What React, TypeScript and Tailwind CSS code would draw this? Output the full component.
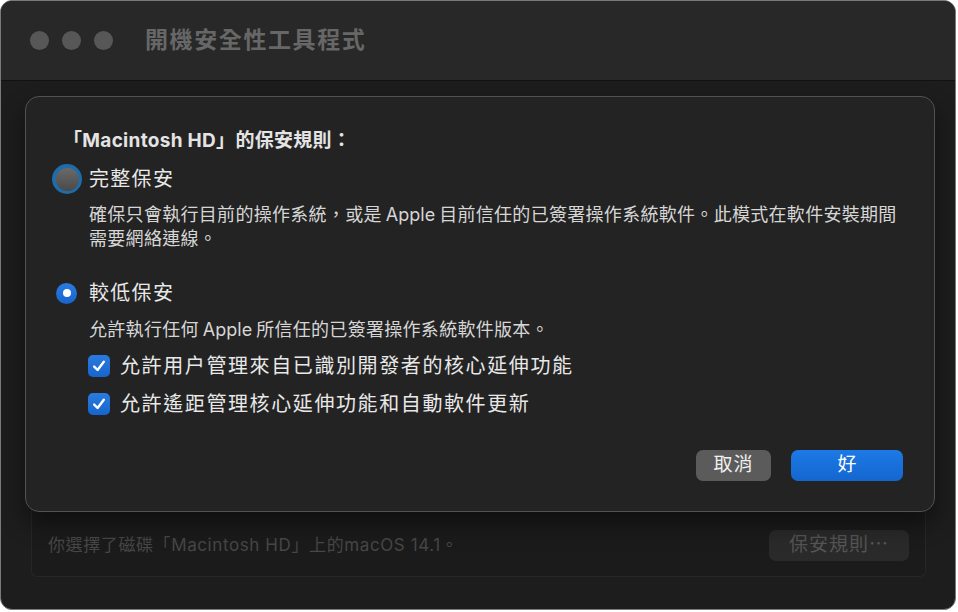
import React from 'react'

const FONT = { fontFamily: '"Inter", "Noto Sans CJK TC", "Noto Sans", sans-serif' }

function CheckBox() {
  return (
    <div className="w-[22px] h-[22px] rounded-[5px] bg-gradient-to-b from-[#2a7be0] to-[#1765cc] flex items-center justify-center shrink-0">
      <svg width="16" height="16" viewBox="0 0 16 16" fill="none">
        <path d="M3.2 8.6 L6.6 12 L12.8 3.8" stroke="white" strokeWidth="2.4" strokeLinecap="round" strokeLinejoin="round" />
      </svg>
    </div>
  )
}

export default function App() {
  return (
    <div className="w-[958px] h-[612px] bg-white" style={FONT}>
      <div className="w-[956px] h-[610px] rounded-[12px] border border-[#7a7a7a] bg-[#1d1d1d] overflow-hidden flex flex-col">
        {/* Title bar */}
        <div className="h-[80px] shrink-0 bg-[#282828] border-b border-[#121212] flex items-center pl-[29px]">
          <div className="flex gap-[13px]">
            <span className="w-[19px] h-[19px] rounded-full bg-[#575757]" />
            <span className="w-[19px] h-[19px] rounded-full bg-[#575757]" />
            <span className="w-[19px] h-[19px] rounded-full bg-[#575757]" />
          </div>
          <div className="ml-[32px] text-[23px] font-bold tracking-[1.6px] text-[#676767] leading-none">開機安全性工具程式</div>
        </div>

        {/* Body */}
        <div className="flex-1 flex flex-col pl-[24px] pt-[15px]">
          {/* Sheet */}
          <div className="relative z-10 w-[910px] h-[416px] rounded-[14px] border border-[#525252] bg-[#232323] shadow-[0_12px_24px_rgba(0,0,0,0.45)] flex flex-col">
            <div className="mt-[32px] ml-[37px] h-[24px] leading-[24px] text-[19px] font-bold text-[#e4e4e4] tracking-[0.3px]">
              「Macintosh HD」的保安規則：
            </div>

            <div className="mt-[11px] h-[30px] flex items-center">
              <div className="ml-[26px] w-[30px] h-[30px] rounded-full bg-[#1e6ca8] flex items-center justify-center">
                <div className="w-[23px] h-[23px] rounded-full bg-gradient-to-b from-[#6a6a6a] to-[#4a4a4a]" />
              </div>
              <span className="ml-[7px] text-[20px] tracking-[1.3px] text-[#e8e8e8]">完整保安</span>
            </div>

            <div className="mt-[9px] ml-[63px] text-[18px] leading-[24px] tracking-[0.3px] text-[#d6d6d6] whitespace-nowrap">
              確保只會執行目前的操作系統，或是<span className="tracking-normal mx-[4px]">Apple</span>目前信任的已簽署操作系統軟件。此模式在軟件安裝期間
              <br />
              需要網絡連線。
            </div>

            <div className="mt-[30px] h-[24px] flex items-center">
              <div className="ml-[30px] w-[21px] h-[21px] rounded-full bg-gradient-to-b from-[#2a7be0] to-[#1765cc] flex items-center justify-center">
                <div className="w-[8px] h-[8px] rounded-full bg-white" />
              </div>
              <span className="ml-[12px] text-[20px] tracking-[1.3px] text-[#e8e8e8]">較低保安</span>
            </div>

            <div className="mt-[13px] ml-[63px] h-[24px] text-[18px] leading-[24px] tracking-[0.3px] text-[#d6d6d6] whitespace-nowrap">
              允許執行任何<span className="tracking-normal mx-[4px]">Apple</span>所信任的已簽署操作系統軟件版本。
            </div>

            <div className="mt-[9px] ml-[62px] h-[30px] flex items-center">
              <CheckBox />
              <span className="ml-[10px] text-[20px] tracking-[1.6px] text-[#e8e8e8]">允許用户管理來自已識別開發者的核心延伸功能</span>
            </div>
            <div className="mt-[8px] ml-[62px] h-[30px] flex items-center">
              <CheckBox />
              <span className="ml-[10px] text-[20px] tracking-[1.6px] text-[#e8e8e8]">允許遙距管理核心延伸功能和自動軟件更新</span>
            </div>

            <div className="mt-[31px] pr-[31px] flex justify-end gap-[20px]">
              <button className="w-[75px] h-[31px] rounded-[7px] bg-[#5b5b5b] text-[19px] tracking-[1px] text-[#f0f0f0] flex items-center justify-center">取消</button>
              <button className="w-[112px] h-[31px] rounded-[7px] bg-gradient-to-b from-[#1c7ae6] to-[#1566cf] text-[19px] text-white flex items-center justify-center">好</button>
            </div>
          </div>

          {/* Footer panel under the sheet */}
          <div className="-mt-[8px] ml-[6px] w-[895px] h-[73px] rounded-b-[6px] border border-t-0 border-[#272727] bg-[#1b1b1b] flex items-end pb-[15px] pl-[16px] pr-[16px]">
            <div className="flex-1 h-[31px] flex items-center text-[17px] tracking-[0.6px] text-[#474747] whitespace-nowrap">
              你選擇了磁碟「Macintosh HD」上的macOS 14.1。
            </div>
            <div className="w-[140px] h-[31px] rounded-[7px] bg-[#2a2a2a] text-[19px] tracking-[1px] text-[#555555] flex items-center justify-center">保安規則⋯</div>
          </div>
        </div>
      </div>
    </div>
  )
}
